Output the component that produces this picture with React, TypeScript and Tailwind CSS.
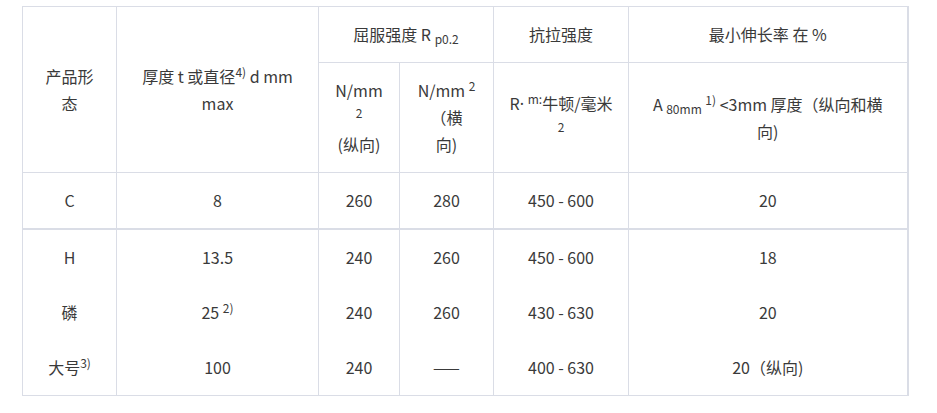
import React from 'react';

const font = { fontFamily: '"Noto Sans CJK SC", "Noto Sans", sans-serif' };

const cell = 'border-[#dadde6] px-2 py-[14px] text-center align-middle leading-[27px] whitespace-nowrap';

type Row = { form: React.ReactNode; size: React.ReactNode; yl: string; yt: string; tensile: string; elong: string };

const rows: Row[] = [
  { form: 'H', size: '13.5', yl: '240', yt: '260', tensile: '450 - 600', elong: '18' },
  { form: '磷', size: <>25 <sup>2)</sup></>, yl: '240', yt: '260', tensile: '430 - 630', elong: '20' },
  { form: <>大号<sup>3)</sup></>, size: '100', yl: '240', yt: '——', tensile: '400 - 630', elong: '20（纵向)' },
];

export default function App() {
  return (
    <div className="min-h-screen bg-white pl-[22px] pt-[6px]" style={font}>
      <table className="w-[885px] table-fixed border-collapse text-[16px] text-[#3a3a3a]">
        <colgroup>
          <col className="w-[94px]" />
          <col className="w-[202px]" />
          <col className="w-[81px]" />
          <col className="w-[94px]" />
          <col className="w-[135px]" />
          <col className="w-[279px]" />
        </colgroup>
        <thead>
          <tr>
            <th rowSpan={2} className={`${cell} border font-normal`}>
              产品形<br />态
            </th>
            <th rowSpan={2} className={`${cell} border font-normal`}>
              厚度 t 或直径<sup>4)</sup> d mm<br />max
            </th>
            <th colSpan={2} className={`${cell} border font-normal`}>
              屈服强度 R <sub>p0.2</sub>
            </th>
            <th className={`${cell} border font-normal`}>抗拉强度</th>
            <th className={`${cell} border border-r-2 font-normal`}>最小伸长率 在 %</th>
          </tr>
          <tr>
            <th className={`${cell} border font-normal`}>
              N/mm<br /><sup>2</sup><br />(纵向)
            </th>
            <th className={`${cell} border font-normal`}>
              N/mm <sup>2</sup><br />（横<br />向)
            </th>
            <th className={`${cell} border font-normal`}>
              R<span className="font-['Noto_Sans']">·</span> <sup>m:</sup>牛顿/毫米<br /><sup>2</sup>
            </th>
            <th className={`${cell} border border-r-2 font-normal`}>
              A <sub>80mm</sub> <sup>1)</sup> &lt;3mm 厚度（纵向和横<br />向)
            </th>
          </tr>
        </thead>
        <tbody>
          <tr>
            <td className={`${cell} border border-b-2`}>C</td>
            <td className={`${cell} border border-b-2`}>8</td>
            <td className={`${cell} border border-b-2`}>260</td>
            <td className={`${cell} border border-b-2`}>280</td>
            <td className={`${cell} border border-b-2`}>450 - 600</td>
            <td className={`${cell} border border-b-2 border-r-2`}>20</td>
          </tr>
          {rows.map((r, i) => {
            const edge = i === rows.length - 1 ? 'border-x border-b' : 'border-x';
            return (
              <tr key={i}>
                <td className={`${cell} ${edge}`}>{r.form}</td>
                <td className={`${cell} ${edge}`}>{r.size}</td>
                <td className={`${cell} ${edge}`}>{r.yl}</td>
                <td className={`${cell} ${edge}`}>{r.yt}</td>
                <td className={`${cell} ${edge}`}>{r.tensile}</td>
                <td className={`${cell} ${edge} border-r-2`}>{r.elong}</td>
              </tr>
            );
          })}
        </tbody>
      </table>
    </div>
  );
}
